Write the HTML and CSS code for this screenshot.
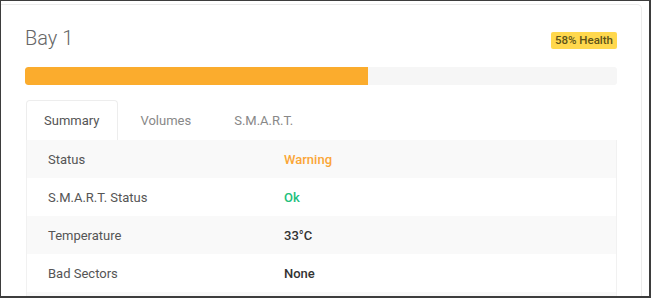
FILE: index.html
```html
<!DOCTYPE html>
<html>
	<head>
		<meta charset="utf-8">
		<title>Bay 1</title>
		<link rel="stylesheet" href="styles.css">
	</head>
	<body>
		<div class="frame">
			<div class="card">
				<div class="card-head">
					<h2 class="card-title">Bay 1</h2>
					<span class="badge">58% Health</span>
				</div>

				<div class="progress">
					<div class="progress-fill" style="width: 58%"></div>
				</div>

				<div class="panel">
					<ul class="tabs">
						<li class="tab active">Summary</li>
						<li class="tab">Volumes</li>
						<li class="tab">S.M.A.R.T.</li>
					</ul>

					<div class="info">
						<div class="info-row">
							<span class="info-label">Status</span>
							<span class="info-value warn">Warning</span>
						</div>
						<div class="info-row">
							<span class="info-label">S.M.A.R.T. Status</span>
							<span class="info-value ok">Ok</span>
						</div>
						<div class="info-row">
							<span class="info-label">Temperature</span>
							<span class="info-value">33°C</span>
						</div>
						<div class="info-row">
							<span class="info-label">Bad Sectors</span>
							<span class="info-value">None</span>
						</div>
						<div class="info-row"></div>
					</div>
				</div>
			</div>
		</div>
	</body>
</html>
```

FILE: styles.css
```css
html,
body {
	margin: 0;
	padding: 0;
	background: #fff;
}

body {
	font-family: Roboto, "Liberation Sans", sans-serif;
	color: #555;
}

.frame {
	width: 651px;
	height: 298px;
	box-sizing: border-box;
	border: 1px solid #3d3d3d;
	border-right-width: 2px;
	border-bottom-width: 2px;
	overflow: hidden;
	background: #fff;
}

.card {
	margin: 3px 7px 0 0;
	height: 400px;
	padding: 21px 24px 0 24px;
	border: 1px solid #ececec;
	border-left: none;
	border-radius: 0 5px 0 0;
	background: #fff;
}

.card-head {
	display: flex;
	justify-content: space-between;
	align-items: flex-start;
}

.card-title {
	margin: 0;
	font-size: 20px;
	line-height: 25px;
	font-weight: 300;
	color: #666;
}

.badge {
	margin-top: 6px;
	padding: 1px 4px;
	font-size: 11.5px;
	line-height: 15px;
	font-weight: 500;
	color: #5e5318;
	background: #ffd84d;
	border-radius: 2px;
}

.progress {
	margin-top: 16px;
	height: 18px;
	border-radius: 3px;
	background: #f6f6f6;
	overflow: hidden;
}

.progress-fill {
	height: 100%;
	background: #fbac2d;
	border-radius: 3px 0 0 3px;
}

.panel {
	margin: 15px 0 0 1px;
}

.tabs {
	list-style: none;
	margin: 0;
	padding: 0;
	display: flex;
}

.tab {
	height: 40px;
	box-sizing: border-box;
	padding: 0 20px 0 21px;
	border: 1px solid transparent;
	border-bottom: none;
	border-radius: 4px 4px 0 0;
	font-size: 13px;
	line-height: 39px;
	color: #888;
}

.tab.active {
	padding: 0 18px 0 17px;
	border-color: #ededed;
	color: #555;
}

.info {
	border: 1px solid #f1f1f1;
	border-top: none;
}

.info-row {
	display: grid;
	grid-template-columns: 236px 1fr;
	height: 38px;
	align-items: center;
	padding-left: 21px;
	font-size: 13px;
}

.info-row:nth-child(odd) {
	background: #f9f9f9;
}

.info-label {
	color: #555;
}

.info-value {
	font-weight: 500;
	color: #333;
}

.info-value.warn {
	color: #fba636;
}

.info-value.ok {
	color: #22c07c;
}
```
